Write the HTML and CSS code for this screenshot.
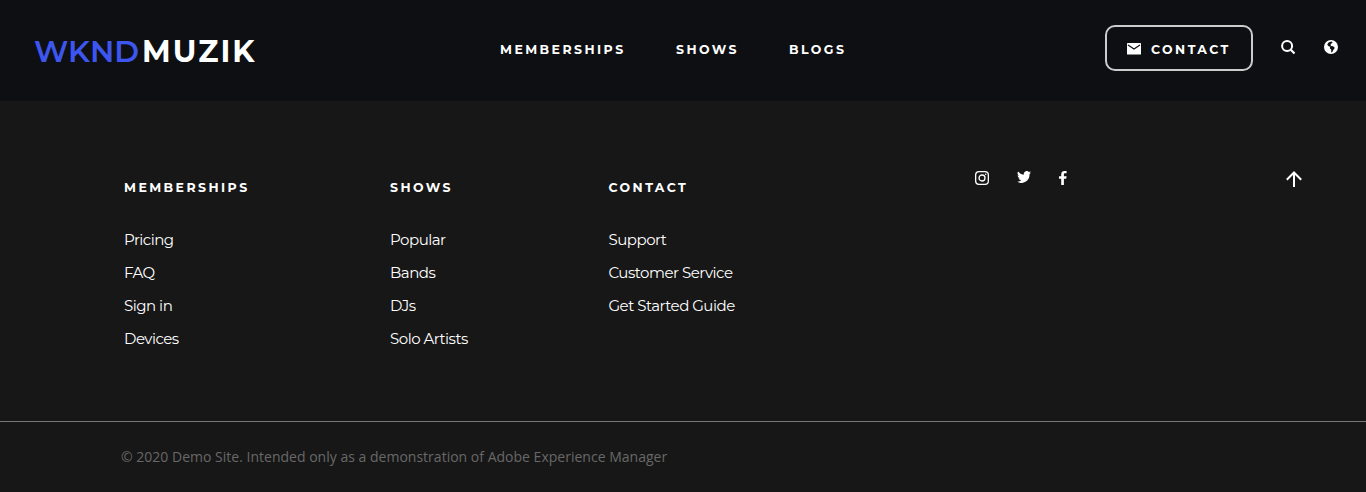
FILE: index.html
```html
<!DOCTYPE html>
<html lang="en">
<head>
<meta charset="utf-8">
<title>WKND Muzik</title>
<link rel="stylesheet" href="styles.css">
</head>
<body>
<header class="header">
  <a class="logo"><span class="logo-wknd">WKND</span><span class="logo-muzik">MUZIK</span></a>
  <nav class="nav">
    <a class="caps">MEMBERSHIPS</a>
    <a class="caps">SHOWS</a>
    <a class="caps">BLOGS</a>
  </nav>
  <div class="actions">
    <a class="button">
      <svg class="mail" width="14" height="12" viewBox="0 0 14 12"><rect width="14" height="11.5" rx=".6" fill="#fff"/><path d="M1 2l6 4 6-4" fill="none" stroke="#0e0f13" stroke-width="1.2"/></svg>
      <span class="caps">CONTACT</span>
    </a>
    <svg class="search" width="15" height="15" viewBox="0 0 15 15" fill="none" stroke="#fff" stroke-width="2"><circle cx="6.1" cy="6.1" r="5"/><path d="M9.8 9.8l3.700 3.700" stroke-width="2.200"/></svg>
    <svg class="globe" width="14" height="14" viewBox="0 0 14 14"><circle cx="7" cy="7" r="7" fill="#fff"/><path d="M7.300 1.500L8.700 2.300 7.200 3.700 6.500 4.600 7 5.800 5.400 6.800 3.800 5.500 3.300 4.200 4.600 2.600zM6.200 6.200L8.200 6 10.300 6.900 10.500 8.600 9.300 10 8.300 12 7.100 12.400 7.300 9.800 5.800 8.200z" fill="#0e0f13"/></svg>
  </div>
</header>
<footer class="footer">
  <div class="columns">
    <section class="column">
      <h2 class="caps">MEMBERSHIPS</h2>
      <a>Pricing</a><a>FAQ</a><a>Sign in</a><a>Devices</a>
    </section>
    <section class="column">
      <h2 class="caps">SHOWS</h2>
      <a>Popular</a><a>Bands</a><a>DJs</a><a>Solo Artists</a>
    </section>
    <section class="column">
      <h2 class="caps">CONTACT</h2>
      <a>Support</a><a>Customer Service</a><a>Get Started Guide</a>
    </section>
    <div class="social">
      <svg class="instagram" width="14" height="14" viewBox="0 0 14 14" fill="none" stroke="#fff" stroke-width="1.3"><rect x=".65" y=".65" width="12.7" height="12.7" rx="3.4"/><circle cx="7" cy="7" r="3"/><circle cx="10.7" cy="3.3" r=".8" fill="#fff" stroke="none"/></svg>
      <svg class="twitter" width="14" height="12" viewBox="0 2.2 24 19.6" preserveAspectRatio="none"><path fill="#fff" d="M24 4.6a10 10 0 0 1-2.8.8 4.9 4.9 0 0 0 2.1-2.7 9.900 9.900 0 0 1-3.100 1.200 4.900 4.900 0 0 0-8.400 4.500A14 14 0 0 1 1.700 3.200a4.900 4.900 0 0 0 1.500 6.500 4.900 4.900 0 0 1-2.200-.6 4.900 4.900 0 0 0 3.900 4.900 5 5 0 0 1-2.200.1 4.900 4.900 0 0 0 4.600 3.400A9.900 9.900 0 0 1 0 19.500 14 14 0 0 0 21.500 7.100 10 10 0 0 0 24 4.600z"/></svg>
      <svg class="facebook" width="8" height="14" viewBox="0 0 8 14"><path fill="#fff" d="M2.200 14V7.700H0V5.200h2.200V3.400C2.200 1.200 3.500 0 5.500 0H7.600v2.200H6.200C5.200 2.200 4.900 2.700 4.900 3.500v1.700h2.700l-.4 2.500H4.900V14z"/></svg>
    </div>
    <svg class="to-top" width="16" height="17" viewBox="0 0 16 17" fill="none" stroke="#fff" stroke-width="2"><path d="M8 16V1.800M.8 8.700L8 1.500l7.200 7.200"/></svg>
  </div>
  <div class="legal"><span class="copyright">© 2020 Demo Site. Intended only as a demonstration of Adobe Experience Manager</span></div>
</footer>
</body>
</html>
```

FILE: styles.css
```css
* { box-sizing: border-box; }
body { margin: 0; background: #171717; color: #fff; font-family: Montserrat, Inter, sans-serif; }
svg { display: block; flex: none; }
a, h2, span { white-space: nowrap; }
.header { height: 101px; background: #0e0f13; display: grid; grid-template-columns: 500px 605px 1fr; align-items: start; }
.logo { display: flex; padding: 34px 0 0 34px; font-size: 30px; line-height: 36px; font-weight: 700; }
.logo-wknd { color: #3d56f0; width: 108px; font-weight: 600; letter-spacing: .1px; }
.logo-muzik { letter-spacing: 2px; }
.caps { margin: 0; font-size: 12.500px; line-height: 18px; font-weight: 700; letter-spacing: 2.440px; }
.nav { display: grid; grid-template-columns: 176px 113px auto; justify-content: start; padding-top: 41px; }
.actions { display: flex; padding-top: 25px; }
.button { display: flex; width: 148px; height: 46px; border: 2px solid #ccc; border-radius: 10px; padding: 14px 0 0 20px; }
.mail { margin: 2px 10px 0 0; }
.search { margin: 15px 0 0 28px; }
.globe { margin: 15px 0 0 28px; }
.footer { height: 391px; }
.columns { height: 320px; display: grid; grid-template-columns: 266px 218.500px 366.500px 311px auto; justify-content: start; align-items: start; padding: 70px 0 0 124px; }
.column { display: flex; flex-direction: column; align-items: flex-start; padding-top: 8px; }
.column h2 { margin-bottom: 26px; }
.column a { font-size: 15px; line-height: 33px; font-weight: 400; letter-spacing: -.5px; }
.social { display: flex; }
.twitter { margin-left: 28px; }
.facebook { margin-left: 28px; }
.legal { border-top: 1px solid #777; padding: 24px 0 0 121px; }
.copyright { display: block; font: 400 14px/21px "Open Sans", sans-serif; letter-spacing: .01px; color: #686868; }
```
